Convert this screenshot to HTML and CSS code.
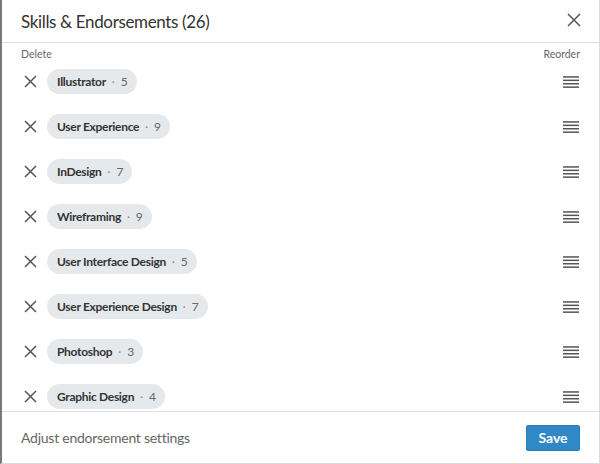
FILE: index.html
```html
<!DOCTYPE html>
<html>
<head>
<meta charset="utf-8">
<link rel="stylesheet" href="styles.css">
</head>
<body>
<div class="modal">
  <header class="modal-header">
    <h1 class="title">Skills &amp; Endorsements (26)</h1>
    <button class="close" aria-label="Close">
      <svg width="14" height="14" viewBox="0 0 14 14"><path d="M1 1L13 13M13 1L1 13" stroke="#555" stroke-width="1.5" fill="none"/></svg>
    </button>
  </header>
  <div class="modal-body">
    <div class="labels"><span>Delete</span><span>Reorder</span></div>
    <ul class="skills">
      <li class="skill"><span class="del"><svg width="13" height="13" viewBox="0 0 13 13"><path d="M1 1L12 12M12 1L1 12" stroke="#555" stroke-width="1.5" fill="none"/></svg></span><span class="pill"><b>Illustrator</b><i>·</i><em>5</em></span><span class="drag"><svg width="16" height="12" viewBox="0 0 16 12"><rect y="0.2" width="16" height="1.5"/><rect y="3.6" width="16" height="1.5"/><rect y="7" width="16" height="1.5"/><rect y="10.4" width="16" height="1.5"/></svg></span></li>
      <li class="skill"><span class="del"><svg width="13" height="13" viewBox="0 0 13 13"><path d="M1 1L12 12M12 1L1 12" stroke="#555" stroke-width="1.5" fill="none"/></svg></span><span class="pill"><b>User Experience</b><i>·</i><em>9</em></span><span class="drag"><svg width="16" height="12" viewBox="0 0 16 12"><rect y="0.2" width="16" height="1.5"/><rect y="3.6" width="16" height="1.5"/><rect y="7" width="16" height="1.5"/><rect y="10.4" width="16" height="1.5"/></svg></span></li>
      <li class="skill"><span class="del"><svg width="13" height="13" viewBox="0 0 13 13"><path d="M1 1L12 12M12 1L1 12" stroke="#555" stroke-width="1.5" fill="none"/></svg></span><span class="pill"><b>InDesign</b><i>·</i><em>7</em></span><span class="drag"><svg width="16" height="12" viewBox="0 0 16 12"><rect y="0.2" width="16" height="1.5"/><rect y="3.6" width="16" height="1.5"/><rect y="7" width="16" height="1.5"/><rect y="10.4" width="16" height="1.5"/></svg></span></li>
      <li class="skill"><span class="del"><svg width="13" height="13" viewBox="0 0 13 13"><path d="M1 1L12 12M12 1L1 12" stroke="#555" stroke-width="1.5" fill="none"/></svg></span><span class="pill"><b>Wireframing</b><i>·</i><em>9</em></span><span class="drag"><svg width="16" height="12" viewBox="0 0 16 12"><rect y="0.2" width="16" height="1.5"/><rect y="3.6" width="16" height="1.5"/><rect y="7" width="16" height="1.5"/><rect y="10.4" width="16" height="1.5"/></svg></span></li>
      <li class="skill"><span class="del"><svg width="13" height="13" viewBox="0 0 13 13"><path d="M1 1L12 12M12 1L1 12" stroke="#555" stroke-width="1.5" fill="none"/></svg></span><span class="pill"><b>User Interface Design</b><i>·</i><em>5</em></span><span class="drag"><svg width="16" height="12" viewBox="0 0 16 12"><rect y="0.2" width="16" height="1.5"/><rect y="3.6" width="16" height="1.5"/><rect y="7" width="16" height="1.5"/><rect y="10.4" width="16" height="1.5"/></svg></span></li>
      <li class="skill"><span class="del"><svg width="13" height="13" viewBox="0 0 13 13"><path d="M1 1L12 12M12 1L1 12" stroke="#555" stroke-width="1.5" fill="none"/></svg></span><span class="pill"><b>User Experience Design</b><i>·</i><em>7</em></span><span class="drag"><svg width="16" height="12" viewBox="0 0 16 12"><rect y="0.2" width="16" height="1.5"/><rect y="3.6" width="16" height="1.5"/><rect y="7" width="16" height="1.5"/><rect y="10.4" width="16" height="1.5"/></svg></span></li>
      <li class="skill"><span class="del"><svg width="13" height="13" viewBox="0 0 13 13"><path d="M1 1L12 12M12 1L1 12" stroke="#555" stroke-width="1.5" fill="none"/></svg></span><span class="pill"><b>Photoshop</b><i>·</i><em>3</em></span><span class="drag"><svg width="16" height="12" viewBox="0 0 16 12"><rect y="0.2" width="16" height="1.5"/><rect y="3.6" width="16" height="1.5"/><rect y="7" width="16" height="1.5"/><rect y="10.4" width="16" height="1.5"/></svg></span></li>
      <li class="skill"><span class="del"><svg width="13" height="13" viewBox="0 0 13 13"><path d="M1 1L12 12M12 1L1 12" stroke="#555" stroke-width="1.5" fill="none"/></svg></span><span class="pill"><b>Graphic Design</b><i>·</i><em>4</em></span><span class="drag"><svg width="16" height="12" viewBox="0 0 16 12"><rect y="0.2" width="16" height="1.5"/><rect y="3.6" width="16" height="1.5"/><rect y="7" width="16" height="1.5"/><rect y="10.4" width="16" height="1.5"/></svg></span></li>
    </ul>
  </div>
  <footer class="modal-footer">
    <a class="settings" href="#">Adjust endorsement settings</a>
    <button class="save">Save</button>
  </footer>
</div>
</body>
</html>
```
FILE: styles.css
```css
* { box-sizing: border-box; }
html, body { margin: 0; padding: 0; background: #fff; }
body { font-family: "Lato", "Liberation Sans", sans-serif; color: #333; }
.modal {
  width: 600px;
  height: 464px;
  display: flex;
  flex-direction: column;
  border-left: 2px solid #7a7a7a;
  border-right: 1px solid #dcdcdc;
  border-bottom: 1px solid #dcdcdc;
  overflow: hidden;
}
.modal-header {
  height: 43px;
  flex: none;
  display: flex;
  align-items: center;
  justify-content: space-between;
  padding: 0 18px 0 19px;
  border-bottom: 1px solid #dedede;
}
.title {
  margin: 0;
  font-size: 17px;
  font-weight: 400;
  color: #333;
  letter-spacing: -0.35px;
}
.close {
  border: 0;
  background: none;
  padding: 0;
  width: 14px;
  height: 14px;
  display: flex;
  margin-top: -3px;
}
.modal-body {
  flex: 1;
  overflow: hidden;
  padding: 0 19px 0 19px;
}
.labels {
  display: flex;
  justify-content: space-between;
  height: 16px;
  padding-top: 5px;
  font-size: 10.5px;
  line-height: 12px;
  color: #666;
}
.skills { list-style: none; margin: 0; padding: 0; }
.skill {
  height: 45px;
  display: flex;
  align-items: center;
}
.del {
  width: 26px;
  display: flex;
  padding-left: 3px;
}
.pill {
  display: inline-flex;
  align-items: center;
  height: 25px;
  padding: 0 9px 0 10px;
  border-radius: 13px;
  background: #e6e9ec;
  font-size: 12px;
}
.pill b { font-weight: 700; color: #333; letter-spacing: -0.3px; }
.pill i { font-style: normal; color: #888; margin: 0 6px 0 6px; font-size: 11px; }
.pill em { font-style: normal; color: #666; font-size: 12px; }
.drag { margin-left: auto; display: flex; margin-right: 1px; }
.drag svg { fill: #555; }
.modal-footer {
  height: 52px;
  flex: none;
  border-top: 1px solid #dedede;
  display: flex;
  align-items: center;
  justify-content: space-between;
  padding: 0 19px;
}
.settings {
  font-size: 14px;
  color: #666;
  text-decoration: none;
  letter-spacing: -0.25px;
}
.save {
  height: 26px;
  width: 54px;
  border: 1px solid #2b7cb5;
  border-radius: 2px;
  background: #3088c6;
  color: #fff;
  font-family: "Lato", "Liberation Sans", sans-serif;
  font-size: 14px;
  font-weight: 700;
  padding: 0;
}
```
